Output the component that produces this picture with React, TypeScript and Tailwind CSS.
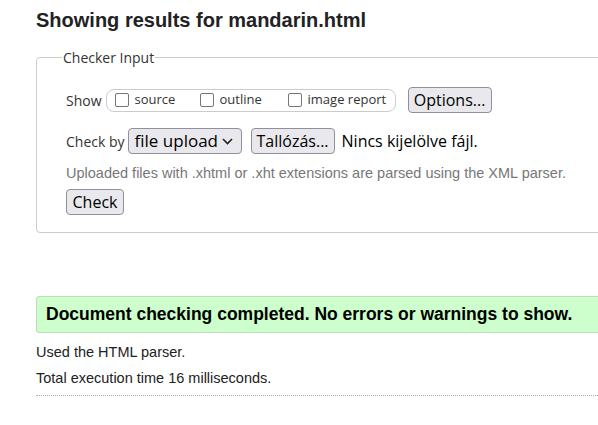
import React from "react";

const seg = { fontFamily: '"Segoe UI", "Open Sans", "Noto Sans", sans-serif' };
const arial = { fontFamily: '"Liberation Sans", Arial, sans-serif' };

function Box({ label }: { label: string }) {
  return (
    <label className="flex items-center gap-[6px] text-[13px] text-[#333]">
      <span className="inline-block w-[14px] h-[14px] border-[1.5px] border-[#767676] rounded-[2px] bg-white" />
      {label}
    </label>
  );
}

function Btn({ children, className = "" }: { children: React.ReactNode; className?: string }) {
  return (
    <span
      className={
        "inline-flex items-center justify-center h-[26px] px-[6px] bg-[#e9e9ed] border border-[#8f8f9d] rounded-[4px] text-[16px] text-black " +
        className
      }
    >
      {children}
    </span>
  );
}

export default function App() {
  return (
    <div className="w-[598px] h-[425px] overflow-hidden bg-white" style={arial}>
      <div className="w-[700px] pl-[36px] pt-[8px]">
        <h2 className="text-[20px] font-bold text-[#222] leading-[24px]">
          Showing results for mandarin.html
        </h2>
        <fieldset className="mt-[15px] border border-[#ccc] rounded-[4px] pl-[29px] pr-4 pb-[17px] pt-[19px]" style={seg}>
          <legend className="px-[1px] ml-[-4px] text-[14px] text-[#333]">Checker Input</legend>
          <div className="flex items-center text-[14px] text-[#333]">
            <span className="mr-[4px]">Show</span>
            <div className="flex items-center gap-[0px] h-[23px] border border-[#ccc] rounded-[8px] pl-[8px] w-[290px]">
              <div className="w-[85px]"><Box label="source" /></div>
              <div className="w-[88px]"><Box label="outline" /></div>
              <Box label="image report" />
            </div>
            <Btn className="ml-[12px] w-[84px]">Options...</Btn>
          </div>
          <div className="flex items-center mt-[15px] text-[14px] text-[#333]">
            <span className="mr-[3px]">Check by</span>
            <span className="inline-flex items-center justify-between h-[26px] w-[114px] pl-[6px] pr-[8px] bg-[#e9e9ed] border border-[#8f8f9d] rounded-[4px] text-[17px] text-black">
              file upload
              <svg width="11" height="7" viewBox="0 0 11 7" fill="none">
                <path d="M1 1l4.5 4.5L10 1" stroke="#222" strokeWidth="1.6" />
              </svg>
            </span>
            <Btn className="ml-[9px] w-[84px]">Tallózás...</Btn>
            <span className="ml-[7px] text-[16px] text-black">Nincs kijelölve fájl.</span>
          </div>
          <p className="mt-[9px] text-[14.5px] text-[#777] leading-[20px]" style={arial}>
            Uploaded files with .xhtml or .xht extensions are parsed using the XML parser.
          </p>
          <div className="mt-[6px]">
            <Btn className="w-[58px]">Check</Btn>
          </div>
        </fieldset>
        <div className="mt-[63px] h-[37px] flex items-center pl-[9px] bg-[#ccffcc] border border-[#bdb] rounded-[3px] text-[17.5px] font-bold text-black">
          Document checking completed. No errors or warnings to show.
        </div>
        <p className="mt-[9px] text-[14.5px] text-[#222] leading-[20px]">Used the HTML parser.</p>
        <p className="mt-[6px] text-[14.5px] text-[#222] leading-[20px]">Total execution time 16 milliseconds.</p>
        <div className="mt-[7px] border-t border-dotted border-[#aaa]" />
      </div>
    </div>
  );
}
